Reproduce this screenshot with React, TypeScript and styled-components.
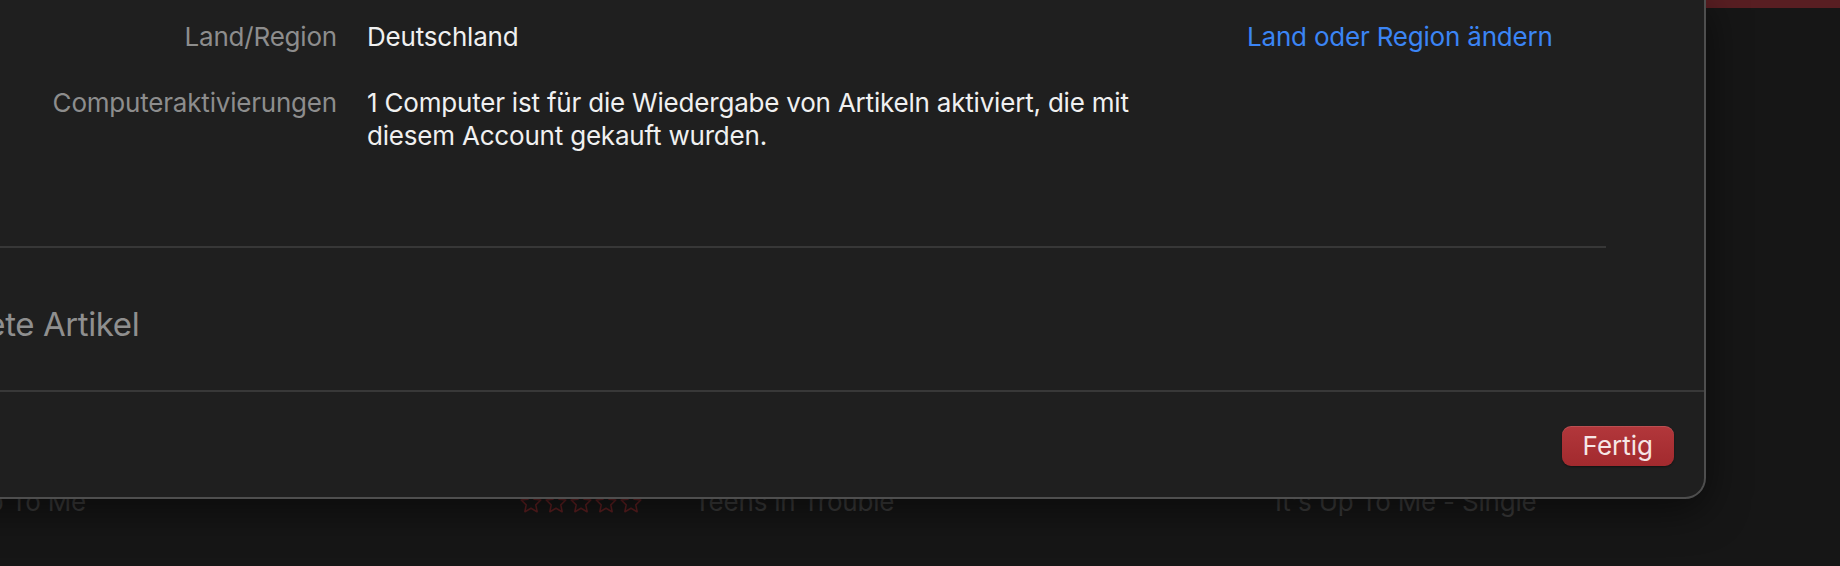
import React from "react";
import styled, { createGlobalStyle } from "styled-components";

const GlobalStyle = createGlobalStyle`
  html, body {
    margin: 0;
    padding: 0;
    background: #171717;
    overflow: hidden;
  }
  body {
    width: 1840px;
    height: 566px;
    font-family: Inter, "Noto Sans", "Liberation Sans", sans-serif;
    -webkit-font-smoothing: antialiased;
  }
  #root {
    position: relative;
    width: 1840px;
    height: 566px;
    overflow: hidden;
  }
`;

/* ---------- background app (dimmed behind the sheet) ---------- */

const BackgroundApp = styled.div`
  display: flex;
  flex-direction: column;
  width: 1840px;
  height: 566px;
  background: #161616;
`;

const TopBar = styled.div`
  height: 8px;
  background: #581e22;
  flex: none;
`;

const TrackList = styled.div`
  display: flex;
  flex-direction: column;
  padding-top: 477px;
  margin-left: -75px;
`;

const TrackRow = styled.div`
  display: grid;
  grid-template-columns: 594px 175px 581px 1fr;
  align-items: center;
  height: 33px;
  font-size: 26px;
  line-height: 33px;
  letter-spacing: -0.2px;
  color: #3a3a3a;
  white-space: nowrap;
`;

const Cell = styled.span`
  overflow: hidden;
`;

const Stars = styled.svg`
  display: block;
  width: 124px;
  height: 24px;
  margin-top: 2px;
`;

const StarRating = () => (
  <Stars viewBox="0 0 124 24">
    {[0, 1, 2, 3, 4].map((i) => (
      <path
        key={i}
        transform={`translate(${i * 25} 0)`}
        d="M12 1.8l3 6.3 6.8.9-5 4.8 1.3 6.9L12 17.3l-6.1 3.4 1.3-6.9-5-4.8 6.8-.9z"
        fill="none"
        stroke="#5e1f21"
        strokeWidth="1.6"
        strokeLinejoin="round"
      />
    ))}
  </Stars>
);

/* ---------- account sheet ---------- */

const Sheet = styled.div`
  position: absolute;
  top: 0;
  left: -300px;
  width: 2006px;
  height: 499px;
  box-sizing: border-box;
  display: flex;
  flex-direction: column;
  background: #1f1f1f;
  border-right: 2px solid #4e4e4e;
  border-bottom: 2px solid #4e4e4e;
  border-bottom-right-radius: 21px;
  box-shadow: 0 10px 40px rgba(0, 0, 0, 0.55);
`;

const InfoSection = styled.section`
  box-sizing: border-box;
  height: 248px;
  margin-right: 98px;
  padding: 20px 0 0 88px;
  border-bottom: 2px solid #373737;
`;

const InfoGrid = styled.div`
  display: grid;
  grid-template-columns: 549px 850px auto;
  column-gap: 30px;
  row-gap: 33px;
  font-size: 26px;
  line-height: 33px;
  letter-spacing: -0.2px;
`;

const Label = styled.div`
  text-align: right;
  color: #8d8d8d;
`;

const Value = styled.div`
  color: #f0f0f0;
  max-width: 790px;
`;

const Link = styled.a`
  color: #3b85f5;
  text-decoration: none;
  cursor: pointer;
  white-space: nowrap;
`;

const HiddenSection = styled.section`
  box-sizing: border-box;
  height: 144px;
  padding: 56px 0 0 104px;
  border-bottom: 2px solid #383838;
`;

const SectionTitle = styled.h2`
  margin: 0;
  font-size: 33px;
  line-height: 40px;
  font-weight: 400;
  letter-spacing: -0.4px;
  color: #8f8f8f;
  white-space: nowrap;
`;

const Footer = styled.footer`
  flex: 1;
  display: flex;
  justify-content: flex-end;
  align-items: flex-start;
  padding: 34px 30px 0 0;
`;

const DoneButton = styled.button`
  height: 40px;
  padding: 0 21px;
  border: none;
  border-radius: 9px;
  background: linear-gradient(#b2373b, #a22a2e);
  box-shadow: inset 0 1px 0 rgba(255, 255, 255, 0.12), 0 1px 2px rgba(0, 0, 0, 0.4);
  color: #f6e6e6;
  font-family: inherit;
  font-size: 26px;
  line-height: 40px;
  cursor: pointer;
`;

export default function App() {
  return (
    <>
      <GlobalStyle />
      <BackgroundApp>
        <TopBar />
        <TrackList>
          <TrackRow>
            <Cell>It's Up To Me</Cell>
            <StarRating />
            <Cell>Teens in Trouble</Cell>
            <Cell>It's Up To Me - Single</Cell>
          </TrackRow>
        </TrackList>
      </BackgroundApp>

      <Sheet>
        <InfoSection>
          <InfoGrid>
            <Label>Land/Region</Label>
            <Value>Deutschland</Value>
            <Link>Land oder Region ändern</Link>
            <Label>Computeraktivierungen</Label>
            <Value>
              1 Computer ist für die Wiedergabe von Artikeln aktiviert, die mit
              diesem Account gekauft wurden.
            </Value>
            <span />
          </InfoGrid>
        </InfoSection>
        <HiddenSection>
          <SectionTitle>Ausgeblendete Artikel</SectionTitle>
        </HiddenSection>
        <Footer>
          <DoneButton>Fertig</DoneButton>
        </Footer>
      </Sheet>
    </>
  );
}
